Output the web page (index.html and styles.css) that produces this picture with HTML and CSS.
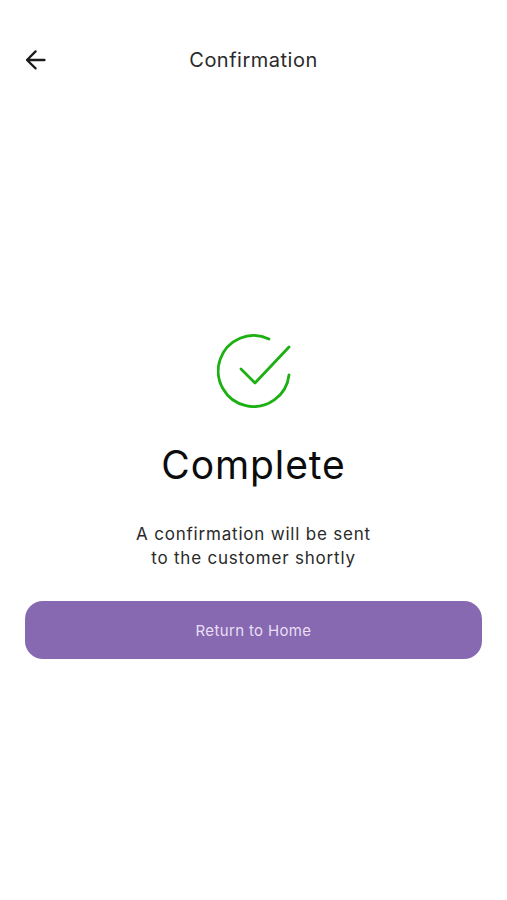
FILE: index.html
```html
<!DOCTYPE html>
<html lang="en">
<head>
<meta charset="utf-8">
<title>Confirmation</title>
<link rel="stylesheet" href="styles.css">
</head>
<body>
<div class="screen">
  <header class="topbar">
    <button class="back" aria-label="Back">
      <svg width="24" height="24" viewBox="0 0 24 24" fill="none" stroke="#1c1c1c" stroke-width="2.3" stroke-linecap="round" stroke-linejoin="round"><path d="M21.5 12H4M12.6 3.4L4 12l8.6 8.4"/></svg>
    </button>
    <h1 class="page-title">Confirmation</h1>
  </header>
  <main class="content">
    <svg class="check" width="74" height="74" viewBox="0 0 74 74" fill="none" stroke="#1cb012" stroke-width="2.8" stroke-linecap="round" stroke-linejoin="round"><path d="M52 5A35.5 35.5 0 1 0 72 41"/><path d="M24 35l14 14L72 13"/></svg>
    <h2 class="heading">Complete</h2>
    <p class="message">A confirmation will be sent<br>to the customer shortly</p>
    <button class="primary">Return to Home</button>
  </main>
</div>
</body>
</html>
```
FILE: styles.css
```css
* { box-sizing: border-box; }
html, body { margin: 0; padding: 0; background: #fff; }
body { font-family: "Inter", "Liberation Sans", sans-serif; color: #111; }
.screen { width: 507px; height: 900px; padding: 0 25px; overflow: hidden; }
.topbar { position: relative; height: 40px; margin-top: 40px; display: flex; align-items: center; justify-content: center; }
.back { position: absolute; left: -2px; top: 8px; width: 24px; height: 24px; padding: 0; border: 0; background: none; }
.back svg { display: block; }
.page-title { margin: 0; font-size: 20px; font-weight: 400; line-height: 40px; color: #2a2a2a; letter-spacing: 0.5px; }
.content { display: flex; flex-direction: column; align-items: center; padding-top: 254px; }
.check { display: block; }
.heading { margin: 33px 0 0; font-size: 39px; line-height: 48px; font-weight: 400; color: #0c0c0c; letter-spacing: 0.9px; }
.message { margin: 33px 0 0; font-size: 17px; line-height: 24px; text-align: center; color: #2a2a2a; letter-spacing: 0.8px; }
.primary { width: 100%; height: 58px; margin-top: 31px; border: 0; border-radius: 18px; background: #8669b1; color: #eadff5; font-family: inherit; font-size: 15px; letter-spacing: 0.35px; }
```
